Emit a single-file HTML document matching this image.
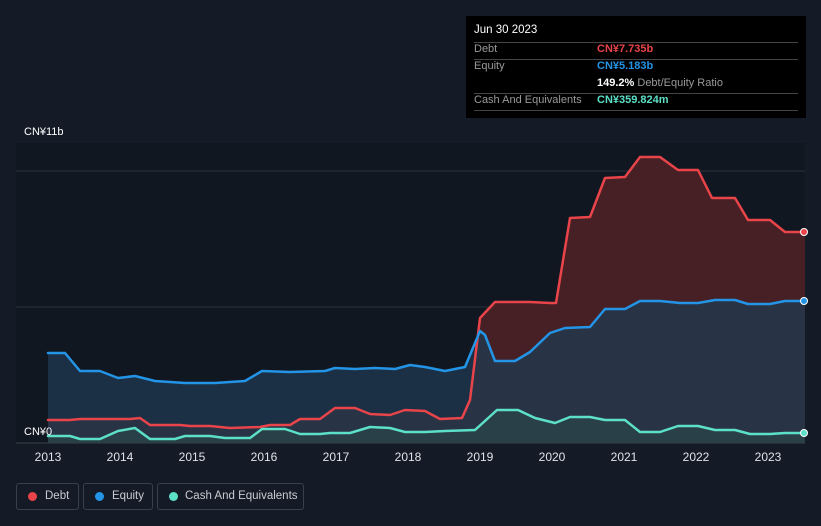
<!DOCTYPE html>
<html><head><meta charset="utf-8"><style>
body{margin:0;width:821px;height:526px;background:#151b26;font-family:"Liberation Sans","Noto Sans CJK SC",sans-serif;overflow:hidden;position:relative}
.tip{position:absolute;left:466px;top:16px;width:340px;height:102px;background:#000;color:#fff;font-size:11px}
.tip .r{position:absolute;left:8px;right:8px;border-top:1px solid #444}
.tip div{white-space:nowrap}
.lg{position:absolute;top:483px;height:27px;border:1px solid #3a404b;border-radius:3px;color:#c8ccd2;font-size:11.5px;line-height:25px;box-sizing:border-box;white-space:nowrap}
.lg i{position:absolute;left:11px;top:8px;width:9px;height:9px;border-radius:50%}
polyline{stroke-linejoin:round;stroke-linecap:round}
</style></head><body>
<svg width="821" height="526" style="position:absolute;left:0;top:0">
<rect x="16" y="143" width="789" height="300" fill="#111720"/>
<line x1="16" y1="171" x2="805" y2="171" stroke="#2a303a"/>
<line x1="16" y1="307" x2="805" y2="307" stroke="#2a303a"/>
<line x1="16" y1="443" x2="805" y2="443" stroke="#3a404a"/>
<polygon fill="#4a2125" opacity="0.95" points="48,443 48,420 70,420 80,419 110,419 130,419 140,418 150,425 180,425 190,426 210,426 230,428 260,427 270,425 290,425 300,419 320,419 335,408 355,408 370,414 390,415 405,410 425,411 440,419 462,418 470,400 480,318 495,302 530,302 550,303 556,303 570,218 590,217 605,178 625,177 640,157 660,157 678,170 698,170 712,198 735,198 748,220 770,220 785,232 805,232 805,443"/>
<polygon fill="#1f3a52" opacity="0.75" points="48,443 48,353 65,353 80,371 100,371 118,378 135,376 155,381 185,383 215,383 245,381 262,371 290,372 325,371 335,368 355,369 375,368 395,369 410,365 425,367 445,371 465,367 480,331 485,335 495,361 515,361 530,352 550,333 565,328 590,327 605,309 625,309 640,301 660,301 680,303 698,303 715,300 735,300 748,304 770,304 785,301 805,301 805,443"/>
<polygon fill="#2a4a4a" opacity="0.6" points="48,443 48,436 70,436 80,439 100,439 118,431 135,428 150,439 175,439 185,436 210,436 225,438 250,438 262,429 285,429 300,434 320,434 330,433 350,433 370,427 390,428 405,432 425,432 445,431 475,430 497,410 518,410 535,418 555,423 570,417 590,417 605,420 625,420 640,432 660,432 678,426 698,426 715,430 735,430 750,434 770,434 785,433 805,433 805,443"/>
<polyline fill="none" stroke="#e8444a" stroke-width="2.5" points="48,420 70,420 80,419 110,419 130,419 140,418 150,425 180,425 190,426 210,426 230,428 260,427 270,425 290,425 300,419 320,419 335,408 355,408 370,414 390,415 405,410 425,411 440,419 462,418 470,400 480,318 495,302 530,302 550,303 556,303 570,218 590,217 605,178 625,177 640,157 660,157 678,170 698,170 712,198 735,198 748,220 770,220 785,232 805,232"/>
<polyline fill="none" stroke="#2394e6" stroke-width="2.5" points="48,353 65,353 80,371 100,371 118,378 135,376 155,381 185,383 215,383 245,381 262,371 290,372 325,371 335,368 355,369 375,368 395,369 410,365 425,367 445,371 465,367 480,331 485,335 495,361 515,361 530,352 550,333 565,328 590,327 605,309 625,309 640,301 660,301 680,303 698,303 715,300 735,300 748,304 770,304 785,301 805,301"/>
<polyline fill="none" stroke="#5ce0c8" stroke-width="2.5" points="48,436 70,436 80,439 100,439 118,431 135,428 150,439 175,439 185,436 210,436 225,438 250,438 262,429 285,429 300,434 320,434 330,433 350,433 370,427 390,428 405,432 425,432 445,431 475,430 497,410 518,410 535,418 555,423 570,417 590,417 605,420 625,420 640,432 660,432 678,426 698,426 715,430 735,430 750,434 770,434 785,433 805,433"/>
<circle cx="804" cy="232" r="3.5" fill="#e8444a" stroke="#fff" stroke-width="1"/>
<circle cx="804" cy="301" r="3.5" fill="#2394e6" stroke="#fff" stroke-width="1"/>
<circle cx="804" cy="433" r="3.5" fill="#5ce0c8" stroke="#fff" stroke-width="1"/>
<g fill="#fff" font-size="11" font-family="Liberation Sans,Noto Sans CJK SC,sans-serif">
<text x="24" y="135">CN¥11b</text>
<text x="24" y="435">CN¥0</text>
</g>
<g fill="#e0e3e8" font-size="12" text-anchor="middle" font-family="Liberation Sans,sans-serif">
<text x="48" y="461">2013</text><text x="120" y="461">2014</text><text x="192" y="461">2015</text><text x="264" y="461">2016</text><text x="336" y="461">2017</text><text x="408" y="461">2018</text><text x="480" y="461">2019</text><text x="552" y="461">2020</text><text x="624" y="461">2021</text><text x="696" y="461">2022</text><text x="768" y="461">2023</text>
</g>
</svg>
<div class="tip">
<div style="position:absolute;left:8px;top:8px;font-size:11.5px">Jun 30 2023</div>
<div class="r" style="top:26px"></div>
<div style="position:absolute;left:8px;top:27px;color:#999">Debt</div><div style="position:absolute;left:131px;top:27px;color:#e8444a;font-weight:bold">CN¥7.735b</div>
<div class="r" style="top:43px"></div>
<div style="position:absolute;left:8px;top:44px;color:#999">Equity</div><div style="position:absolute;left:131px;top:44px;color:#2394e6;font-weight:bold">CN¥5.183b</div>
<div style="position:absolute;left:131px;top:61px;color:#999"><b style="color:#fff">149.2%</b> Debt/Equity Ratio</div>
<div class="r" style="top:77px"></div>
<div style="position:absolute;left:8px;top:78px;color:#999">Cash And Equivalents</div><div style="position:absolute;left:131px;top:78px;color:#5ce0c8;font-weight:bold">CN¥359.824m</div>
<div class="r" style="top:94px"></div>
</div>
<div class="lg" style="left:16px;width:63px"><i style="background:#e8444a"></i><span style="position:absolute;left:28px">Debt</span></div>
<div class="lg" style="left:83px;width:70px"><i style="background:#2394e6"></i><span style="position:absolute;left:28px">Equity</span></div>
<div class="lg" style="left:157px;width:147px"><i style="background:#5ce0c8"></i><span style="position:absolute;left:27px">Cash And Equivalents</span></div>
</body></html>
